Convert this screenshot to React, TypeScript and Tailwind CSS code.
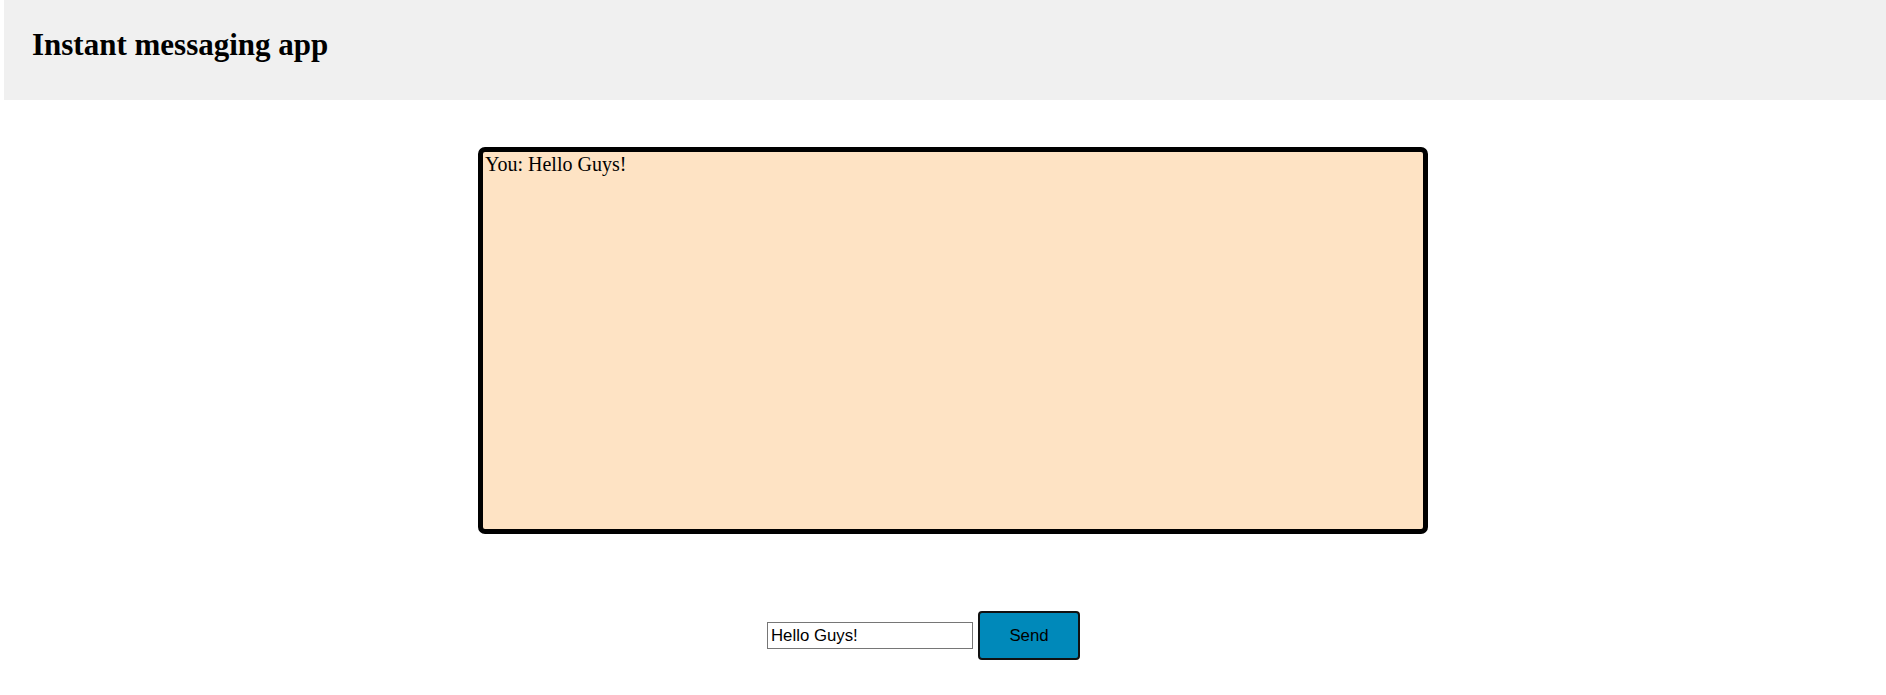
import React, { useState } from "react";

export default function App() {
  const [msg, setMsg] = useState("Hello Guys!");
  return (
    <div className="w-[1886px] h-[695px] bg-white" style={{ fontFamily: '"Liberation Serif", serif' }}>
      <header className="ml-[4px] h-[100px] bg-[#f0f0f0] pt-[29px] pl-[28px]">
        <h1 className="text-[31px] leading-[31px] font-bold text-black" style={{ fontFamily: '"Liberation Serif", serif' }}>
          Instant messaging app
        </h1>
      </header>
      <div className="pt-[47px] pl-[478px]">
        <div className="w-[950px] h-[387px] border-[5px] border-black rounded-[7px] bg-[#fee3c4] pl-[2px] text-[20px] leading-[24px] text-black">
          You: Hello Guys!
        </div>
      </div>
      <div className="flex items-start pt-[77px] pl-[767px]" style={{ fontFamily: '"Liberation Sans", Arial, sans-serif' }}>
        <input
          value={msg}
          onChange={(e) => setMsg(e.target.value)}
          className="mt-[11px] w-[206px] h-[27px] border border-[#767676] px-[3px] text-[16.8px] text-black bg-white outline-none"
        />
        <button className="ml-[5px] w-[102px] h-[49px] border-2 border-[#111] rounded-[4px] bg-[#0089ba] text-[16.8px] text-black">
          Send
        </button>
      </div>
    </div>
  );
}
